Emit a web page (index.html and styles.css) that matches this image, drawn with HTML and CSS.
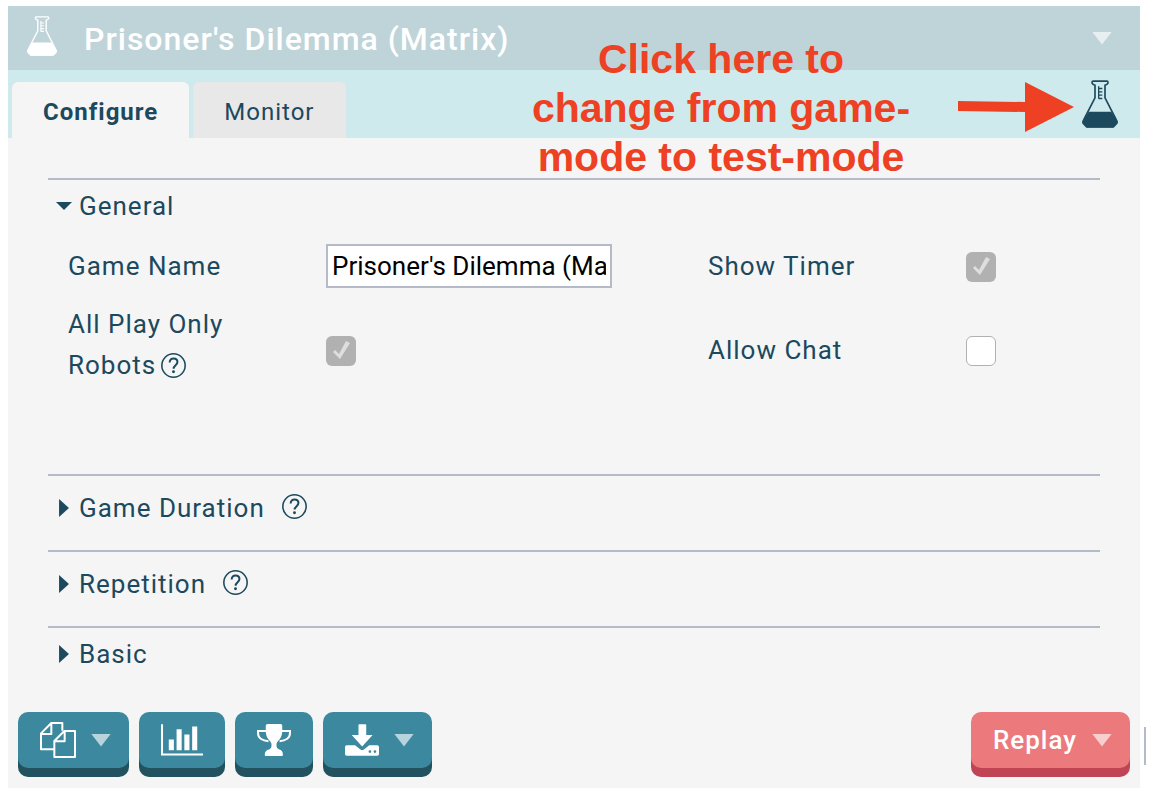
FILE: index.html
```html
<!DOCTYPE html>
<html lang="en">
<head>
  <meta charset="UTF-8" />
  <meta name="viewport" content="width=device-width, initial-scale=1.0" />
  <title>Prisoner's Dilemma (Matrix)</title>
  <link rel="stylesheet" href="styles.css">
</head>
<body>
  <!-- Shared icons -->
  <svg class="sprite" xmlns="http://www.w3.org/2000/svg" aria-hidden="true">
    <symbol id="flask" viewBox="0 0 108 143">
      <path d="M34 3h41q3 0 3 4t-3 5l-6 3v38l34 66q5 9-1 13l-8 8H14l-8-8q-6-4-1-13l34-66V15l-6-3q-3-1-3-5t4-4z" fill="none" stroke="currentColor" stroke-width="5"/>
      <path d="M20 95h68l18 28-2 8-11 11H15L4 131l-2-8z" fill="currentColor"/>
      <path d="M50 18v38M50 25h11M50 35h11M50 45h11M50 55h11" fill="none" stroke="currentColor" stroke-width="4"/>
    </symbol>
    <symbol id="help" viewBox="0 0 24 24">
      <circle cx="12" cy="12" r="11.2" fill="none" stroke="currentColor" stroke-width="1.5"/>
      <path d="M8.3 9.2c0-2.6 1.6-3.9 3.8-3.9s3.7 1.3 3.7 3.4c0 3-3.7 3-3.7 6.3" fill="none" stroke="currentColor" stroke-width="1.9"/>
      <circle cx="12" cy="18" r="1.4" fill="currentColor"/>
    </symbol>
  </svg>

  <main class="window">
    <header class="title-bar">
      <svg class="title-flask"><use href="#flask"/></svg>
      <h1>Prisoner's Dilemma (Matrix)</h1>
      <button class="title-menu" aria-label="Game menu"><span class="caret"></span></button>
    </header>

    <nav class="tab-bar">
      <button class="tab active">Configure</button>
      <button class="tab">Monitor</button>
      <button class="mode-toggle" aria-label="Test mode"><svg><use href="#flask"/></svg></button>
    </nav>

    <div class="settings">
      <details class="group" open>
        <summary>General</summary>
        <div class="fields">
          <label for="gameName">Game Name</label>
          <input type="text" id="gameName" class="text-box" value="Prisoner's Dilemma (Matrix)">
          <label for="showTimer">Show Timer</label>
          <input type="checkbox" id="showTimer" class="tick" checked disabled>
          <label for="onlyRobots" class="two-line">All Play Only Robots <svg class="help"><use href="#help"/></svg></label>
          <input type="checkbox" id="onlyRobots" class="tick" checked disabled>
          <label for="allowChat">Allow Chat</label>
          <input type="checkbox" id="allowChat" class="tick">
        </div>
      </details>
      <details class="group roomy">
        <summary>Game Duration <svg class="help"><use href="#help"/></svg></summary>
      </details>
      <details class="group roomy">
        <summary>Repetition <svg class="help"><use href="#help"/></svg></summary>
      </details>
      <details class="group">
        <summary>Basic</summary>
      </details>
    </div>

    <footer class="actions">
      <button class="btn menu" aria-label="Copy">
        <svg width="36" height="36" viewBox="0 0 108 108" fill="none" stroke="currentColor" stroke-width="6" stroke-linejoin="round">
          <path d="M42 82H3V34L34 3H67V26M3 36H34V4"/>
          <path d="M43 57V105H105V27H73zM43 58H74V28"/>
        </svg>
        <span class="caret"></span>
      </button>
      <button class="btn" aria-label="Results">
        <svg width="42" height="32" viewBox="0 0 124 93">
          <path d="M3 0V89H124" fill="none" stroke="currentColor" stroke-width="6"/>
          <path d="M23 45h15v32H23zM46 15h15v62H46zM69 30h15v47H69zM92 7h15v70H92z" fill="currentColor"/>
        </svg>
      </button>
      <button class="btn" aria-label="Leaderboard">
        <svg width="34" height="32" viewBox="0 0 101 95">
          <path d="M26 5Q26 0 32 0H70Q75 0 75 5V20C75 45 60 49 58 59V66Q58 74 66 76Q77 78 77 92Q77 95 74 95H26Q23 95 23 92Q23 78 36 76Q43 74 43 66V59C41 49 26 45 26 20z" fill="currentColor"/>
          <path d="M27 21H3V27C3 41 15 50 34 51M74 21H98V27C98 41 86 50 67 51" fill="none" stroke="currentColor" stroke-width="6"/>
        </svg>
      </button>
      <button class="btn menu" aria-label="Download">
        <svg width="34" height="32" viewBox="0 0 101 93">
          <path d="M40 2Q40 0 42 0H61Q63 0 63 2V32H82L51 66L20 32H40z" fill="currentColor"/>
          <path d="M5 62H30L45 74Q51 79 57 74L72 62H96Q101 62 101 67V88Q101 93 96 93H5Q0 93 0 88V67Q0 62 5 62zM70 81a4 4 0 1 0 8 0a4 4 0 1 0-8 0M85 81a4 4 0 1 0 8 0a4 4 0 1 0-8 0" fill="currentColor" fill-rule="evenodd"/>
        </svg>
        <span class="caret"></span>
      </button>
      <button class="btn menu replay">Replay <span class="caret"></span></button>
    </footer>

    <!-- Hint over the top bars -->
    <p class="hint">Click here to change from game-mode to test-mode</p>
    <svg class="hint-arrow" viewBox="0 0 116 50"><path d="M0 19L67 20V0L116 25L67 50V30L0 29z" fill="currentColor"/></svg>
  </main>
  <div class="scroll-thumb"></div>
</body>
</html>
```
FILE: styles.css
```css
* {
  box-sizing: border-box;
}

body {
  margin: 0;
  padding: 6px 14px 6px 8px;
  font-family: Roboto, sans-serif;
  font-size: 26px;
  letter-spacing: 1px;
  color: #1c495d;
  background: #fff;
  position: relative;
}

button {
  font: inherit;
  letter-spacing: inherit;
  color: inherit;
  border: none;
  background: none;
  padding: 0;
  cursor: pointer;
}

svg {
  display: block;
  flex: none;
}

.sprite {
  position: absolute;
  width: 0;
  height: 0;
}

.window {
  position: relative;
  background: #f5f5f5;
}

.caret {
  width: 20px;
  height: 13px;
  background: currentColor;
  opacity: 0.63;
  clip-path: polygon(0 0, 100% 0, 50% 100%);
}

/* Title bar */
.title-bar {
  display: flex;
  align-items: center;
  height: 64px;
  padding: 0 28px 0 18px;
  background: #bfd4d9;
  color: #fff;
}

.title-flask {
  width: 32px;
  height: 40px;
  margin-bottom: 4px;
}

h1 {
  flex: 1;
  margin: 0 0 0 26px;
  padding-top: 2px;
  font-size: 32px;
  font-weight: 500;
}

.title-menu {
  display: flex;
}

/* Tabs */
.tab-bar {
  display: flex;
  align-items: flex-end;
  gap: 4px;
  height: 68px;
  padding: 0 22px 0 4px;
  background: #cfeaec;
}

.tab {
  height: 56px;
  padding: 4px 31px 0;
  font-size: 24px;
  border-radius: 6px 6px 0 0;
  background: #e8e8e8;
}

.tab.active {
  font-weight: bold;
  background: #f5f5f5;
}

.mode-toggle {
  margin-left: auto;
  padding-bottom: 10px;
}

.mode-toggle svg {
  width: 36px;
  height: 48px;
}

/* Settings */
.settings {
  padding: 40px 40px 0;
}

.group {
  border-top: 2px solid #b5bac9;
}

summary {
  display: flex;
  align-items: center;
  height: 52px;
  padding-left: 8px;
  cursor: pointer;
  list-style: none;
}

summary::before {
  content: "";
  width: 16px;
  height: 18px;
  margin-right: 7px;
  background: #1c495d;
  clip-path: polygon(19% 0, 81% 50%, 19% 100%);
}

details[open] > summary::before {
  clip-path: polygon(0 28%, 100% 28%, 50% 72%);
}

.roomy summary {
  height: 64px;
  margin-bottom: 10px;
}

.help {
  width: 25px;
  height: 25px;
}

summary .help {
  margin: 0 0 4px 17px;
}

.fields {
  display: grid;
  grid-template-columns: 258px 1fr 258px 134px;
  grid-template-rows: 68px 100px;
  align-items: center;
  padding: 0 0 74px 20px;
}

.two-line {
  align-self: start;
  width: 180px;
  padding-top: 4px;
  line-height: 41px;
}

.two-line .help {
  display: inline-block;
  vertical-align: middle;
  margin: 0 0 4px -3px;
}

.text-box {
  width: 286px;
  height: 44px;
  padding: 0 4px;
  border: 2px solid #b5bac9;
  border-radius: 0;
  background: #fff;
  color: #000;
  font: inherit;
}

.tick {
  appearance: none;
  width: 30px;
  height: 30px;
  margin: 2px 0 0;
  border: 1px solid #b1b1b1;
  border-radius: 6px;
  background: #fff;
}

.tick:checked {
  border: none;
  background: #b1b1b1;
}

.tick:checked::before {
  content: "";
  display: block;
  width: 30px;
  height: 30px;
  background: #dedede;
  clip-path: polygon(7px 16px, 9px 14px, 13px 18px, 20px 5px, 24px 7px, 14px 23px);
}

/* Bottom buttons */
.actions {
  display: flex;
  gap: 10px;
  padding: 32px 10px 20px;
}

.btn {
  display: flex;
  align-items: center;
  gap: 15px;
  height: 56px;
  padding: 0 22px;
  border-radius: 10px;
  background: #3c899f;
  box-shadow: 0 9px 0 #22525f;
  color: #fff;
}

.btn.menu {
  padding-right: 18px;
}

.btn:hover {
  filter: brightness(1.05);
}

.replay {
  margin-left: auto;
  font-weight: 500;
  background: #ec7a7c;
  box-shadow: 0 9px 0 #c04454;
}

/* Hint */
.hint {
  position: absolute;
  top: 29px;
  left: 513px;
  width: 400px;
  margin: 0;
  font: bold 41px/49px "Liberation Sans", sans-serif;
  letter-spacing: normal;
  text-align: center;
  color: #ee4023;
}

.hint-arrow {
  position: absolute;
  top: 76px;
  right: 66px;
  width: 116px;
  height: 50px;
  color: #ee4023;
}

.scroll-thumb {
  position: absolute;
  right: 8px;
  bottom: 29px;
  width: 2px;
  height: 38px;
  background: #b5bac9;
}
```
